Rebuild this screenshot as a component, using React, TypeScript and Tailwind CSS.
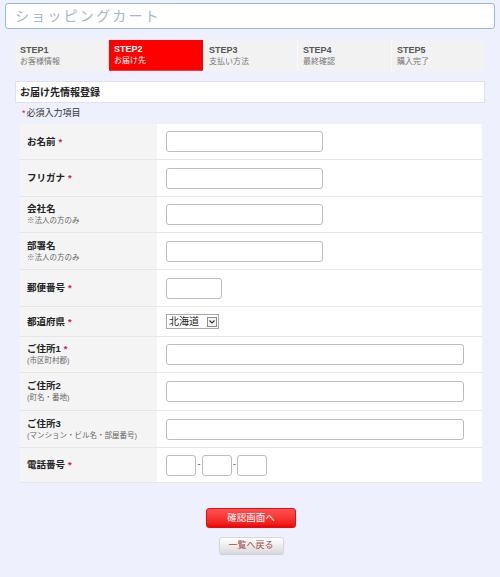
import React from "react";

const font = { fontFamily: '"Liberation Sans", "Noto Sans CJK JP", sans-serif' };

const steps = [
  { no: "STEP1", label: "お客様情報" },
  { no: "STEP2", label: "お届け先" },
  { no: "STEP3", label: "支払い方法" },
  { no: "STEP4", label: "最終確認" },
  { no: "STEP5", label: "購入完了" },
];

type Row = {
  label: string;
  sub?: string;
  required?: boolean;
  h: string;
  field: "long" | "mid" | "zip" | "pref" | "tel";
};

const rows: Row[] = [
  { label: "お名前", required: true, h: "h-[36px]", field: "mid" },
  { label: "フリガナ", required: true, h: "h-[37px]", field: "mid" },
  { label: "会社名", sub: "※法人の方のみ", h: "h-[36px]", field: "mid" },
  { label: "部署名", sub: "※法人の方のみ", h: "h-[37px]", field: "mid" },
  { label: "郵便番号", required: true, h: "h-[37px]", field: "zip" },
  { label: "都道府県", required: true, h: "h-[30px]", field: "pref" },
  { label: "ご住所1", sub: "(市区町村郡)", required: true, h: "h-[36px]", field: "long" },
  { label: "ご住所2", sub: "(町名・番地)", h: "h-[38px]", field: "long" },
  { label: "ご住所3", sub: "(マンション・ビル名・部屋番号)", h: "h-[37px]", field: "long" },
  { label: "電話番号", required: true, h: "h-[35px]", field: "tel" },
];

const inputCls = "h-[21px] border border-[#bcbcbc] rounded-[3px] bg-white outline-none";

const Field = ({ kind }: { kind: Row["field"] }) => {
  if (kind === "mid") return <input type="text" className={`${inputCls} w-[157px]`} />;
  if (kind === "long") return <input type="text" className={`${inputCls} w-[298px]`} />;
  if (kind === "zip") return <input type="text" className={`${inputCls} w-[56px]`} />;
  if (kind === "pref")
    return (
      <div className="flex items-center h-[15px] w-[53px] border border-[#a8a8a8] bg-white">
        <span className="pl-[2px] text-[10px] leading-none text-[#222] flex-1">北海道</span>
        <span className="mr-[1px] flex items-center justify-center w-[10px] h-[10px] border border-[#8a8a8a] bg-[#f4f4f4]">
          <svg width="6" height="4" viewBox="0 0 6 4">
            <path d="M0.5 0.5 L3 3 L5.5 0.5" fill="none" stroke="#333" strokeWidth="1.2" />
          </svg>
        </span>
      </div>
    );
  return (
    <div className="flex items-center">
      <input type="text" className={`${inputCls} w-[30px]`} />
      <span className="w-[6px] text-center text-[9px] text-[#444]">-</span>
      <input type="text" className={`${inputCls} w-[30px]`} />
      <span className="w-[5px] text-center text-[9px] text-[#444]">-</span>
      <input type="text" className={`${inputCls} w-[30px]`} />
    </div>
  );
};

export default function App() {
  return (
    <div className="w-[500px] min-h-[577px] bg-[#eef0fd] pt-[3px]" style={font}>
      <div className="mx-[5px] h-[26px] border border-[#92bcd2] rounded-[3px] bg-white flex items-center pl-[9px]">
        <span className="text-[14px] tracking-[2.2px] text-[#a4b8c6]">ショッピングカート</span>
      </div>

      <div className="mt-[11px] mx-[15px] h-[31px] grid grid-cols-5 bg-[#f2f2f2]">
        {steps.map((s, i) => (
          <div
            key={s.no}
            className={`flex flex-col justify-center pl-[5px] ${
              i === 1 ? "bg-[#ff0000] text-white border-b border-[#e84040]" : "text-[#555]"
            } ${i > 1 ? "border-l border-[#fafafa]" : ""}`}
          >
            <span className="text-[9px] font-bold leading-[11px]">{s.no}</span>
            <span className={`text-[8px] leading-[11px] ${i === 1 ? "text-white" : "text-[#777]"}`}>{s.label}</span>
          </div>
        ))}
      </div>

      <div className="mt-[10px] mx-[15px] h-[22px] bg-white border border-[#dfe0ea] flex items-center pl-[4px]">
        <span className="text-[10px] font-bold text-[#222]">お届け先情報登録</span>
      </div>

      <div className="h-[21px] flex items-center pl-[22px] text-[9px] text-[#333]">
        <span className="text-[#c8283c] mr-[1px]">*</span>必須入力項目
      </div>

      <div className="mx-[20px] w-[462px] bg-white">
        {rows.map((r) => (
          <div key={r.label} className={`grid grid-cols-[137px_1fr] border-b border-[#e6e6e6] ${r.h}`}>
            <div className="bg-[#f4f4f4] flex flex-col justify-center pl-[7px]">
              <div className="text-[9.5px] font-bold text-[#222] leading-[12px]">
                {r.label}
                {r.required && <span className="text-[#c8283c] ml-[3px]">*</span>}
              </div>
              {r.sub && <div className="text-[7.5px] text-[#666] leading-[11px]">{r.sub}</div>}
            </div>
            <div className="flex items-center pl-[9px]">
              <Field kind={r.field} />
            </div>
          </div>
        ))}
      </div>

      <div className="flex flex-col items-center pt-[25px]">
        <button className="w-[90px] h-[20px] rounded-[3px] border border-[#e01010] bg-gradient-to-b from-[#ff5050] to-[#ee0000] text-white text-[9.5px] ml-[2px]">
          確認画面へ
        </button>
        <button className="mt-[9px] w-[65px] h-[17px] rounded-[3px] border border-[#d8d8d8] bg-gradient-to-b from-[#ffffff] to-[#dcdcdc] text-[#a04848] text-[9px] ml-[2px] shadow-[0_1px_1px_rgba(0,0,0,0.15)]">
          一覧へ戻る
        </button>
      </div>
    </div>
  );
}
